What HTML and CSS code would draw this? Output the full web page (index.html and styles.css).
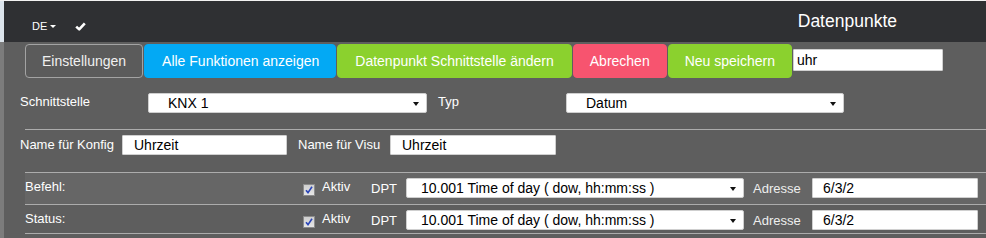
FILE: index.html
```html
<!DOCTYPE html>
<html lang="de">
<head>
<meta charset="utf-8">
<title>Datenpunkte</title>
<link rel="stylesheet" href="styles.css">
</head>
<body>
<div class="page">
  <header class="header">
    <div class="lang">DE<span class="caret-w"></span></div>
    <svg class="check" width="11" height="9" viewBox="0 0 11 9"><path d="M1.2 4.6 L4.2 7.4 L9.8 1.4" fill="none" stroke="#fff" stroke-width="2.6" stroke-linejoin="round"/></svg>
    <div class="title">Datenpunkte</div>
  </header>
  <main class="main">
    <div class="toolbar">
      <button class="btn btn-outline">Einstellungen</button>
      <button class="btn btn-blue">Alle Funktionen anzeigen</button>
      <button class="btn btn-green btn-wide">Datenpunkt Schnittstelle ändern</button>
      <button class="btn btn-red">Abrechen</button>
      <button class="btn btn-green">Neu speichern</button>
      <input class="search" type="text" value="uhr">
    </div>

    <div class="row row-if">
      <label class="lbl lbl-if">Schnittstelle</label>
      <div class="sel sel-if">KNX 1</div>
      <label class="lbl lbl-typ">Typ</label>
      <div class="sel sel-typ">Datum</div>
    </div>

    <div class="rule"></div>

    <div class="row row-name">
      <label class="lbl lbl-konfig">Name für Konfig</label>
      <input class="txt txt-konfig" type="text" value="Uhrzeit">
      <label class="lbl lbl-visu">Name für Visu</label>
      <input class="txt txt-visu" type="text" value="Uhrzeit">
    </div>

    <div class="dp-table">
      <div class="dp-row dp-row-odd">
        <span class="dp-label">Befehl:</span>
        <span class="cb"><svg width="8" height="8" viewBox="0 0 8 8"><path d="M1 4.2 L3 6.6 L7 0.8" fill="none" stroke="#2a45b8" stroke-width="1.6"/></svg></span>
        <span class="dp-aktiv">Aktiv</span>
        <span class="dp-dpt">DPT</span>
        <div class="sel sel-dpt">10.001 Time of day ( dow, hh:mm:ss )</div>
        <span class="dp-adr">Adresse</span>
        <input class="txt txt-adr" type="text" value="6/3/2">
      </div>
      <div class="dp-row dp-row-even">
        <span class="dp-label">Status:</span>
        <span class="cb"><svg width="8" height="8" viewBox="0 0 8 8"><path d="M1 4.2 L3 6.6 L7 0.8" fill="none" stroke="#2a45b8" stroke-width="1.6"/></svg></span>
        <span class="dp-aktiv">Aktiv</span>
        <span class="dp-dpt">DPT</span>
        <div class="sel sel-dpt">10.001 Time of day ( dow, hh:mm:ss )</div>
        <span class="dp-adr">Adresse</span>
        <input class="txt txt-adr" type="text" value="6/3/2">
      </div>
    </div>
  </main>
</div>
</body>
</html>
```

FILE: styles.css
```css
* { box-sizing: border-box; }
html, body { margin: 0; padding: 0; }
body {
  background: #f2f2f2;
  font-family: "Liberation Sans", Arial, sans-serif;
  color: #fff;
  width: 986px;
  height: 238px;
  overflow: hidden;
}
.page {
  margin-top: 1px;
}
.header {
  height: 41px;
  background: #2f3033;
  border-left: 4px solid #dce4ec;
  display: flex;
  align-items: flex-start;
  padding-left: 28px;
}
.lang {
  margin-top: 19px;
  font-size: 11px;
  line-height: 12px;
  display: flex;
  align-items: center;
  color: #fff;
}
.caret-w {
  display: inline-block;
  margin-left: 3px;
  width: 0; height: 0;
  border-left: 3px solid transparent;
  border-right: 3px solid transparent;
  border-top: 3px solid #fff;
}
.check {
  margin-left: 19px;
  margin-top: 21px;
}
.title {
  margin-left: auto;
  margin-right: 89px;
  margin-top: 10px;
  font-size: 17.5px;
  line-height: 20px;
  color: #fff;
}
.main {
  background: #5e5e5e;
  border-left: 4px solid #7c7c7c;
  height: 196px;
  padding-top: 2px;
}
.toolbar {
  display: flex;
  align-items: flex-start;
  gap: 1px;
  padding-left: 21px;
}
.btn {
  height: 34px;
  border: 1px solid transparent;
  border-radius: 4px;
  padding: 0 16px;
  font-family: inherit;
  font-size: 14px;
  color: #fff;
  cursor: pointer;
}
.btn-wide { padding: 0 17px; }
.btn-outline { background: #5b5b5b; border-color: #a3a3a3; color: #f0f0f0; }
.btn-blue { background: #03a9f4; border-color: #03a9f4; padding: 0 16px 0 17px; }
.btn-green { background: #8bd12e; border-color: #8bd12e; }
.btn-red { background: #f7546f; border-color: #f7546f; }
.search {
  margin-top: 5px;
  width: 150px;
  height: 22px;
  border: 1px solid #d0d0d0;
  border-radius: 1px;
  padding: 0 3px;
  font-family: inherit;
  font-size: 14px;
  color: #000;
  background: #fff;
}
.row {
  display: flex;
  align-items: center;
  padding-left: 16px;
  height: 20px;
}
.row-if { margin-top: 15px; }
.lbl {
  font-size: 13px;
  color: #fff;
  line-height: 15px;
  margin-top: -3px;
}
.lbl-if { width: 128px; }
.lbl-typ { margin-left: 11px; width: 128px; }
.sel {
  position: relative;
  height: 20px;
  background: #fff;
  border: 1px solid #cfcfcf;
  border-radius: 2px;
  color: #000;
  font-size: 14px;
  line-height: 18px;
  white-space: nowrap;
}
.sel::after {
  content: "";
  position: absolute;
  right: 7px;
  top: 8px;
  width: 0; height: 0;
  border-left: 3.5px solid transparent;
  border-right: 3.5px solid transparent;
  border-top: 4px solid #111;
}
.sel-if { width: 279px; padding-left: 19px; }
.sel-typ { width: 278px; padding-left: 19px; }
.rule {
  height: 1px;
  background: #acacac;
  margin: 16px 0 5px 21px;
}
.row-name .lbl { margin-top: -2px; }
.lbl-konfig { width: 102px; }
.lbl-visu { margin-left: 11px; width: 92px; }
.txt {
  height: 20px;
  border: 1px solid #d0d0d0;
  border-radius: 1px;
  background: #fff;
  color: #000;
  font-family: inherit;
  font-size: 14px;
  padding: 0 0 0 11px;
}
.txt-konfig { width: 165px; }
.txt-visu { width: 166px; }
.dp-table {
  margin-top: 17px;
  margin-left: 21px;
  border-top: 1px solid #acacac;
}
.dp-row {
  display: flex;
  align-items: center;
  border-bottom: 1px solid #acacac;
  font-size: 13px;
}
.dp-row-odd { background: #666666; padding: 5px 0 6px; }
.dp-row-even { padding: 5px 0 3px; }
.dp-label { width: 278px; margin-top: -3px; }
.cb {
  width: 12px;
  height: 12px;
  border: 1px solid #8c8c8c;
  background: linear-gradient(#cfcfcf, #e6e6e6);
  display: flex;
  align-items: center;
  justify-content: center;
  margin-top: 4px;
}
.dp-aktiv { margin-left: 7px; width: 49px; margin-top: -4px; }
.dp-dpt { width: 35px; }
.sel-dpt { width: 338px; padding-left: 14px; }
.dp-adr { margin-left: 9px; width: 59px; color: #eee; }
.txt-adr { width: 166px; padding-left: 10px; }
```
